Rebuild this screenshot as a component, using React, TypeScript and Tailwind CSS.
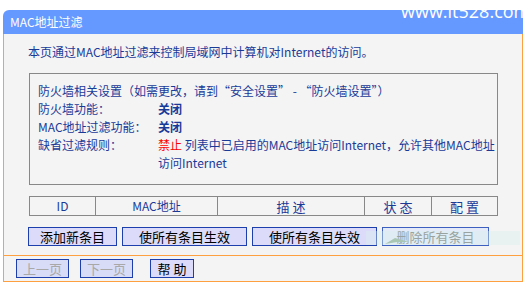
export default function App() {
  const blue = "text-[#1a3a98]";
  return (
    <div className="relative w-[527px] h-[287px] bg-white font-['Noto_Sans_CJK_SC',sans-serif] text-[12px]">
      <div className="absolute left-[401px] top-[1px] z-10 text-white text-[18px] leading-[20px] font-['Open_Sans',sans-serif] whitespace-nowrap">
        www.it528.com
      </div>
      <div className="pt-[10px] pl-[3px] w-[523px]">
        <div className="h-[24px] bg-[#6699ff] rounded-tl-[6px] text-white pl-[7px] flex items-center leading-none">
          MAC地址过滤
        </div>
        <div className="border-x border-b border-[#ffa040] bg-[#f4f4f4] pl-[24px] pt-[9px] pb-[9px]">
          <div className={`leading-[18px] ${blue}`}>
            本页通过MAC地址过滤来控制局域网中计算机对Internet的访问。
          </div>
          <div className={`mt-[12px] ml-[1px] w-[469px] border border-[#888] pl-[8px] pt-[8px] pb-[12px] leading-[18px] ${blue}`}>
            <div>防火墙相关设置（如需更改，请到“安全设置” - “防火墙设置”）</div>
            <div className="flex">
              <div className="w-[120px]">防火墙功能：</div>
              <div className="font-bold">关闭</div>
            </div>
            <div className="flex">
              <div className="w-[120px]">MAC地址过滤功能：</div>
              <div className="font-bold">关闭</div>
            </div>
            <div className="flex">
              <div className="w-[120px] shrink-0">缺省过滤规则：</div>
              <div>
                <span className="text-[#ff0000]">禁止</span> 列表中已启用的MAC地址访问Internet，允许其他MAC地址
                <br />
                访问Internet
              </div>
            </div>
          </div>
          <div className={`mt-[11px] ml-[1px] w-[469px] h-[20px] border border-[#888] flex ${blue} leading-none`}>
            <div className="w-[65px] flex items-center justify-center">ID</div>
            <div className="w-[122px] border-l border-[#888] flex items-center justify-center">MAC地址</div>
            <div className="w-[147px] border-l border-[#888] flex items-center justify-center text-[13px]">描 述</div>
            <div className="w-[67px] border-l border-[#888] flex items-center justify-center text-[13px]">状 态</div>
            <div className="flex-1 border-l border-[#888] flex items-center justify-center text-[13px]">配 置</div>
          </div>
          <div className="relative mt-[11px] flex gap-[5px] text-[13px] leading-none">
            <button className="w-[89px] h-[19px] border border-[#1d3fae] bg-[#dcdcfa] text-black flex items-center justify-center">
              添加新条目
            </button>
            <button className="w-[125px] h-[19px] border border-[#1d3fae] bg-[#dcdcfa] text-black flex items-center justify-center">
              使所有条目生效
            </button>
            <button className="w-[125px] h-[19px] border border-[#1d3fae] bg-[#dcdcfa] text-black flex items-center justify-center">
              使所有条目失效
            </button>
            <button className="relative w-[107px] h-[19px] border border-[#3d5fc0] bg-[#e4eaf8] text-[#707070] flex items-center justify-center">
              删除所有条目
              <svg className="absolute left-[2px] bottom-[1px]" width="24" height="8" viewBox="0 0 24 8">
                <polygon points="0,8 10,2 24,6 12,6" fill="#8aa890" />
              </svg>
            </button>
            <div className="absolute left-[338px] top-[4px] w-[154px] h-[14px] bg-[#d8f0ea] opacity-40"></div>
          </div>
        </div>
        <div className="border-x border-b border-[#ffa040] bg-[#f4f4f4] pl-[12px] pt-[3px] pb-[3px] flex text-[13px] leading-none">
          <button className="w-[53px] h-[19px] border border-[#1d3fae] bg-[#d8dcf6] text-[#a8a8a8] flex items-center justify-center">
            上一页
          </button>
          <button className="ml-[11px] w-[53px] h-[19px] border border-[#1d3fae] bg-[#d8dcf6] text-[#a8a8a8] flex items-center justify-center">
            下一页
          </button>
          <button className="ml-[17px] w-[44px] h-[19px] border border-[#1d3fae] bg-[#dcdcfa] text-black flex items-center justify-center">
            帮 助
          </button>
        </div>
      </div>
    </div>
  );
}
